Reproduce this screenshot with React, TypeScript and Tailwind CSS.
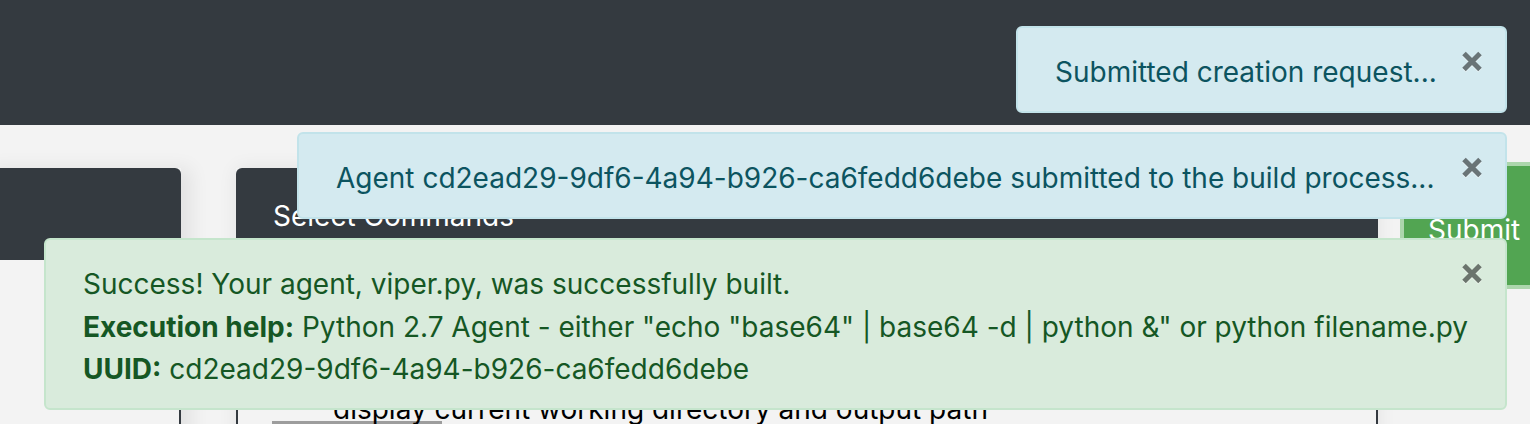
import React from "react";

function CloseX() {
  return (
    <button className="absolute right-[22px] top-[23px] flex h-[21px] w-[22px] items-center justify-center opacity-50">
      <svg width="22" height="21" viewBox="0 0 22 21" className="drop-shadow-[0_1px_0_#ffffff]">
        <path d="M3 2.5 L19 18.5 M19 2.5 L3 18.5" stroke="#000" strokeWidth="5" strokeLinecap="butt" />
      </svg>
    </button>
  );
}

type AlertProps = {
  kind: "info" | "success";
  width: string;
  padRight: string;
  children: React.ReactNode;
};

function Alert({ kind, width, padRight, children }: AlertProps) {
  const tone =
    kind === "info"
      ? "bg-[#d4eaf0] border-[#c2e3ea] text-[#0c5460]"
      : "bg-[#d9ebdc] border-[#c5e5cc] text-[#155724]";
  return (
    <div
      className={`relative whitespace-nowrap rounded-[6px] border-2 pb-[17px] pl-[37px] pt-[23px] text-[28px] leading-[42.5px] ${tone} ${width} ${padRight}`}
    >
      {children}
      <CloseX />
    </div>
  );
}

export default function App() {
  return (
    <div className="relative h-[424px] w-[1530px] overflow-hidden bg-[#f3f3f3] font-['Inter',sans-serif]">
      <div className="h-[125px] bg-[#343a40]" />

      <div className="flex items-start pt-[43px]">
        {/* left card */}
        <div className="ml-[-20px] flex w-[201px] shrink-0 flex-col shadow-[10px_0_18px_rgba(0,0,0,0.07)]">
          <div className="h-[92px] rounded-tr-[6px] bg-[#343a40]" />
          <div className="h-[200px] border-r-2 border-[#343a40] bg-[#f3f3f3]" />
        </div>

        {/* commands card */}
        <div className="ml-[55px] flex w-[1142px] shrink-0 flex-col shadow-[0_0_18px_rgba(0,0,0,0.07)]">
          <div className="flex h-[92px] items-center rounded-t-[6px] bg-[#343a40] pl-[37px] pt-[4px] text-[28px] text-white">
            Select Commands
          </div>
          <div className="h-[200px] border-x-2 border-[#343a40] bg-[#f3f3f3]">
            <div className="mt-[128px] pl-[95px] text-[28px] leading-[42px] text-black">
              display current working directory and output path
            </div>
            <div className="ml-[34px] mt-[-9px] h-[6px] w-[170px] bg-[#9d9d9d]" />
          </div>
        </div>

        {/* submit */}
        <div className="ml-[22px] mt-[-6px] flex h-[127px] w-[170px] shrink-0 items-center rounded-[6px] border-[4px] border-[#acd6ac] bg-[#52a552] pl-[24px] pt-[8px] text-[28px] text-white">
          Submit
        </div>
      </div>

      {/* notifications */}
      <div className="absolute right-[23px] top-[26px] flex flex-col items-end gap-[19.5px]">
        <Alert kind="info" width="w-[491px]" padRight="pr-[67px]">
          Submitted creation request...
        </Alert>
        <Alert kind="info" width="w-[1210px]" padRight="pr-[67px]">
          Agent cd2ead29-9df6-4a94-b926-ca6fedd6debe submitted to the build process...
        </Alert>
        <Alert kind="success" width="w-[1463px]" padRight="pr-[36px]">
          <div>Success! Your agent, viper.py, was successfully built.</div>
          <div>
            <span className="font-bold">Execution help:</span> Python 2.7 Agent - either "echo "base64" | base64 -d | python &amp;" or python filename.py
          </div>
          <div>
            <span className="font-bold">UUID:</span> cd2ead29-9df6-4a94-b926-ca6fedd6debe
          </div>
        </Alert>
      </div>
    </div>
  );
}
